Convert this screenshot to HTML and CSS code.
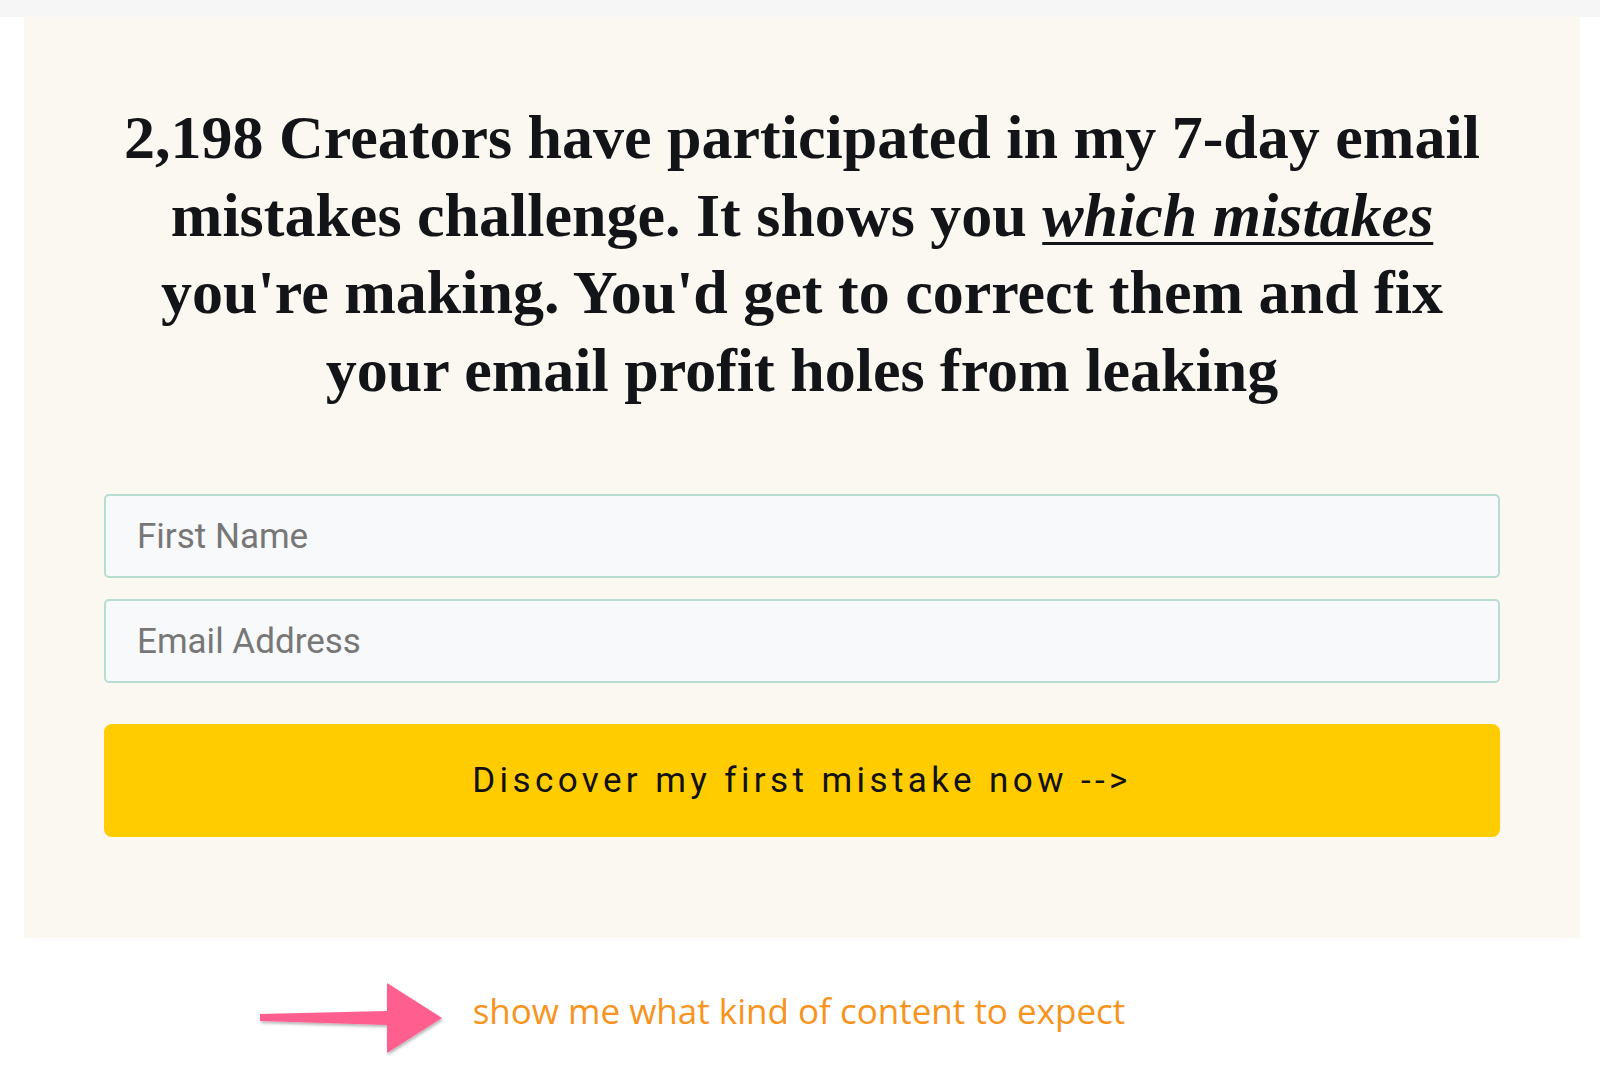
FILE: index.html
```html
<!DOCTYPE html>
<html>
<head>
<meta charset="utf-8">
<link rel="stylesheet" href="styles.css">
</head>
<body>
<div class="topstrip"></div>
<section class="panel">
  <h1 class="headline">2,198 Creators have participated in my 7-day email mistakes challenge. It shows you <em class="em">which mistakes</em> you're making. You'd get to correct them and fix your email profit holes from leaking</h1>
  <form class="form">
    <input class="field" type="text" placeholder="First Name">
    <input class="field" type="email" placeholder="Email Address">
    <button class="cta" type="button">Discover my first mistake now --&gt;</button>
  </form>
</section>
<div class="below">
  <a class="link" href="#">
    <svg class="arrow" width="200" height="85" viewBox="0 0 200 85">
      <defs>
        <filter id="sh" x="-10%" y="-20%" width="130%" height="150%">
          <feDropShadow dx="1" dy="2" stdDeviation="1.5" flood-color="#000" flood-opacity="0.3"/>
        </filter>
      </defs>
      <polygon filter="url(#sh)" fill="#ff5f8f" points="6,36 133,33 133,5 188,40 133,75 133,47 6,43"/>
    </svg>
    show me what kind of content to expect
  </a>
</div>
</body>
</html>
```
FILE: styles.css
```css
html, body {
  margin: 0;
  padding: 0;
  background: #ffffff;
}
.topstrip {
  height: 17px;
  background: #f6f6f6;
}
.panel {
  width: 1556px;
  margin-left: 24px;
  box-sizing: border-box;
  background: #fbf8f1;
  padding: 82px 80px 101px;
}
.headline {
  margin: 0 auto;
  max-width: 1396px;
  font-family: "Liberation Serif", serif;
  font-weight: 700;
  font-size: 62px;
  line-height: 77.5px;
  color: #121418;
  text-align: center;
}
.em {
  font-style: italic;
  text-decoration: underline;
  text-decoration-thickness: 3px;
  text-underline-offset: 6px;
}
.form {
  margin-top: 85px;
  display: flex;
  flex-direction: column;
}
.field {
  height: 84px;
  box-sizing: border-box;
  border: 2px solid #b8dcd2;
  border-radius: 5px;
  background: #f7f9fa;
  padding: 0 31px;
  font-family: Roboto, sans-serif;
  font-size: 35px;
  color: #333;
  margin: 0 0 21px;
  outline: none;
}
.field::placeholder {
  color: #777777;
}
.cta {
  margin-top: 20px;
  height: 113px;
  border: none;
  border-radius: 8px;
  background: #ffcc00;
  font-family: Roboto, sans-serif;
  font-size: 35px;
  letter-spacing: 4.4px;
  color: #111;
}
.below {
  width: 1556px;
  margin-left: 24px;
  display: flex;
  justify-content: center;
  padding: 49px 0 70px;
}
.link {
  position: relative;
  left: -3px;
  font-family: "Open Sans", sans-serif;
  font-size: 35px;
  color: #f7941d;
  text-decoration: none;
}
.arrow {
  position: absolute;
  left: -219px;
  top: -9px;
}
```
